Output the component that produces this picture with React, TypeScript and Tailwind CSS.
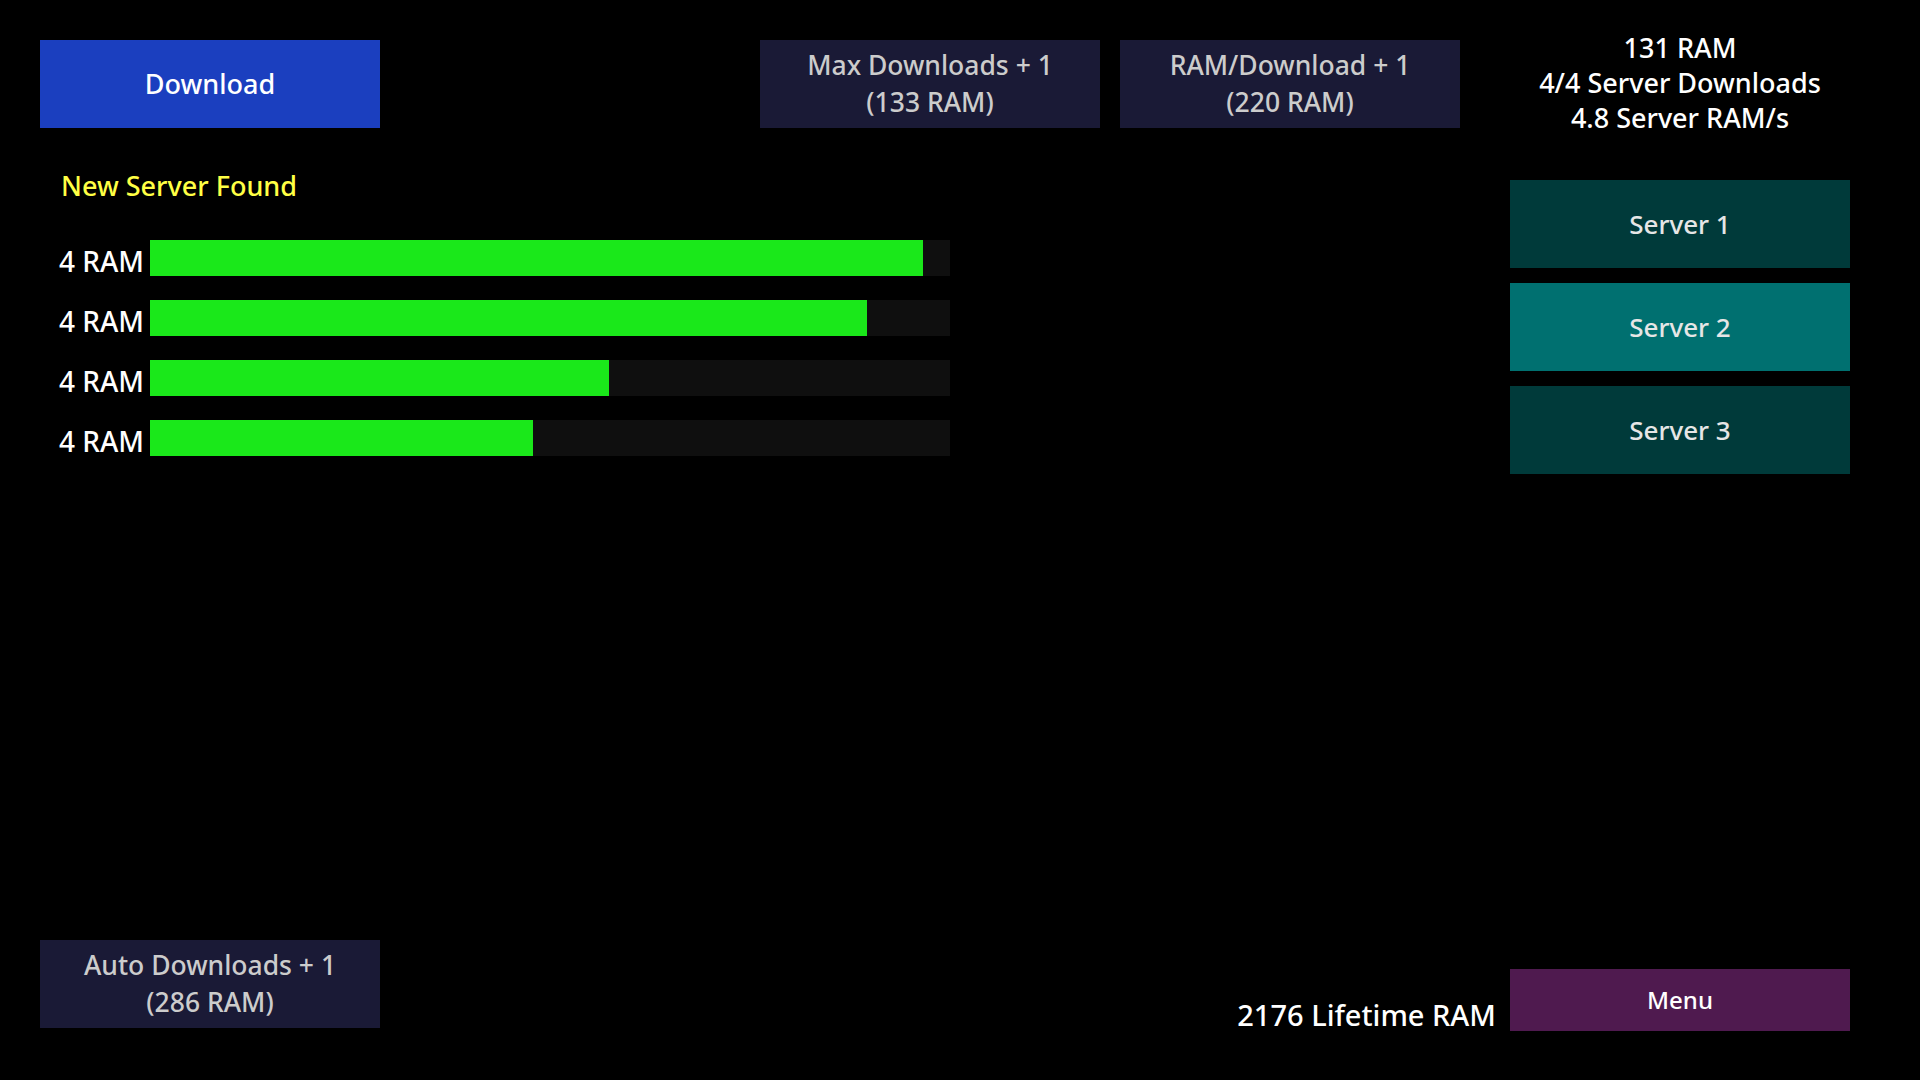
import React from "react"

const BARS = [96.6, 89.6, 57.4, 47.9]

function UpgradeButton({ label, cost }: { label: string; cost: number }) {
  return (
    <button className="flex h-[88px] w-[340px] flex-col items-center justify-center bg-[#1a1a36] text-[26.5px] font-medium leading-[37px] text-[#cccccc]">
      <span>{label}</span>
      <span>({cost} RAM)</span>
    </button>
  )
}

function ServerButton({ name, active }: { name: string; active?: boolean }) {
  return (
    <button
      className={
        "flex h-[88px] w-[340px] items-center justify-center text-[26px] font-medium text-[#e6e6e6] " +
        (active ? "bg-[#007070]" : "bg-[#003a3a]")
      }
    >
      {name}
    </button>
  )
}

function DownloadBar({ progress }: { progress: number }) {
  return (
    <div className="flex h-9 items-end">
      <span className="mb-[1px] w-[104px] whitespace-nowrap text-right text-[28px] font-medium leading-none text-white">
        4 RAM
      </span>
      <div className="ml-1.5 h-9 w-[800px] bg-[#0f0f0f]">
        <div className="h-full bg-[#1ae81a]" style={{ width: `${progress}%` }} />
      </div>
    </div>
  )
}

export default function App() {
  return (
    <div className="flex h-[1080px] w-[1920px] flex-col overflow-hidden bg-black px-10 font-['Noto_Sans',sans-serif]">
      <div className="flex flex-1 pt-10">
        {/* left area */}
        <div className="flex w-[1420px] flex-col">
          <div className="flex">
            <button className="flex h-[88px] w-[340px] items-center justify-center bg-[#1b3fbf] text-[27px] font-medium text-white">
              Download
            </button>
            <div className="ml-[380px]">
              <UpgradeButton label="Max Downloads + 1" cost={133} />
            </div>
            <div className="ml-5">
              <UpgradeButton label="RAM/Download + 1" cost={220} />
            </div>
          </div>
          <div className="ml-[21px] mt-[40px] text-[27px] font-medium leading-9 text-[#ffff44]">
            New Server Found
          </div>
          <div className="mt-[36px] flex flex-col gap-6">
            {BARS.map((p, i) => (
              <DownloadBar key={i} progress={p} />
            ))}
          </div>
        </div>

        {/* right column */}
        <div className="ml-[50px] flex w-[340px] flex-col">
          <div className="-mt-[10px] flex flex-col items-center text-[27px] font-medium leading-[35px] text-white">
            <span>131 RAM</span>
            <span>4/4 Server Downloads</span>
            <span>4.8 Server RAM/s</span>
          </div>
          <div className="mt-[45px] flex flex-col gap-[15px]">
            <ServerButton name="Server 1" />
            <ServerButton name="Server 2" active />
            <ServerButton name="Server 3" />
          </div>
        </div>
      </div>

      {/* bottom row */}
      <div className="mr-[30px] flex items-start pb-[49px]">
        <UpgradeButton label="Auto Downloads + 1" cost={286} />
        <div className="flex-1" />
        <div className="mt-[29px] flex items-end">
          <span className="mr-[14px] whitespace-nowrap text-[29px] font-medium leading-[32px] text-white">
            2176 Lifetime RAM
          </span>
          <button className="flex h-[62px] w-[340px] items-center justify-center bg-[#4f1a4f] text-[24px] font-medium text-white">
            Menu
          </button>
        </div>
      </div>
    </div>
  )
}
